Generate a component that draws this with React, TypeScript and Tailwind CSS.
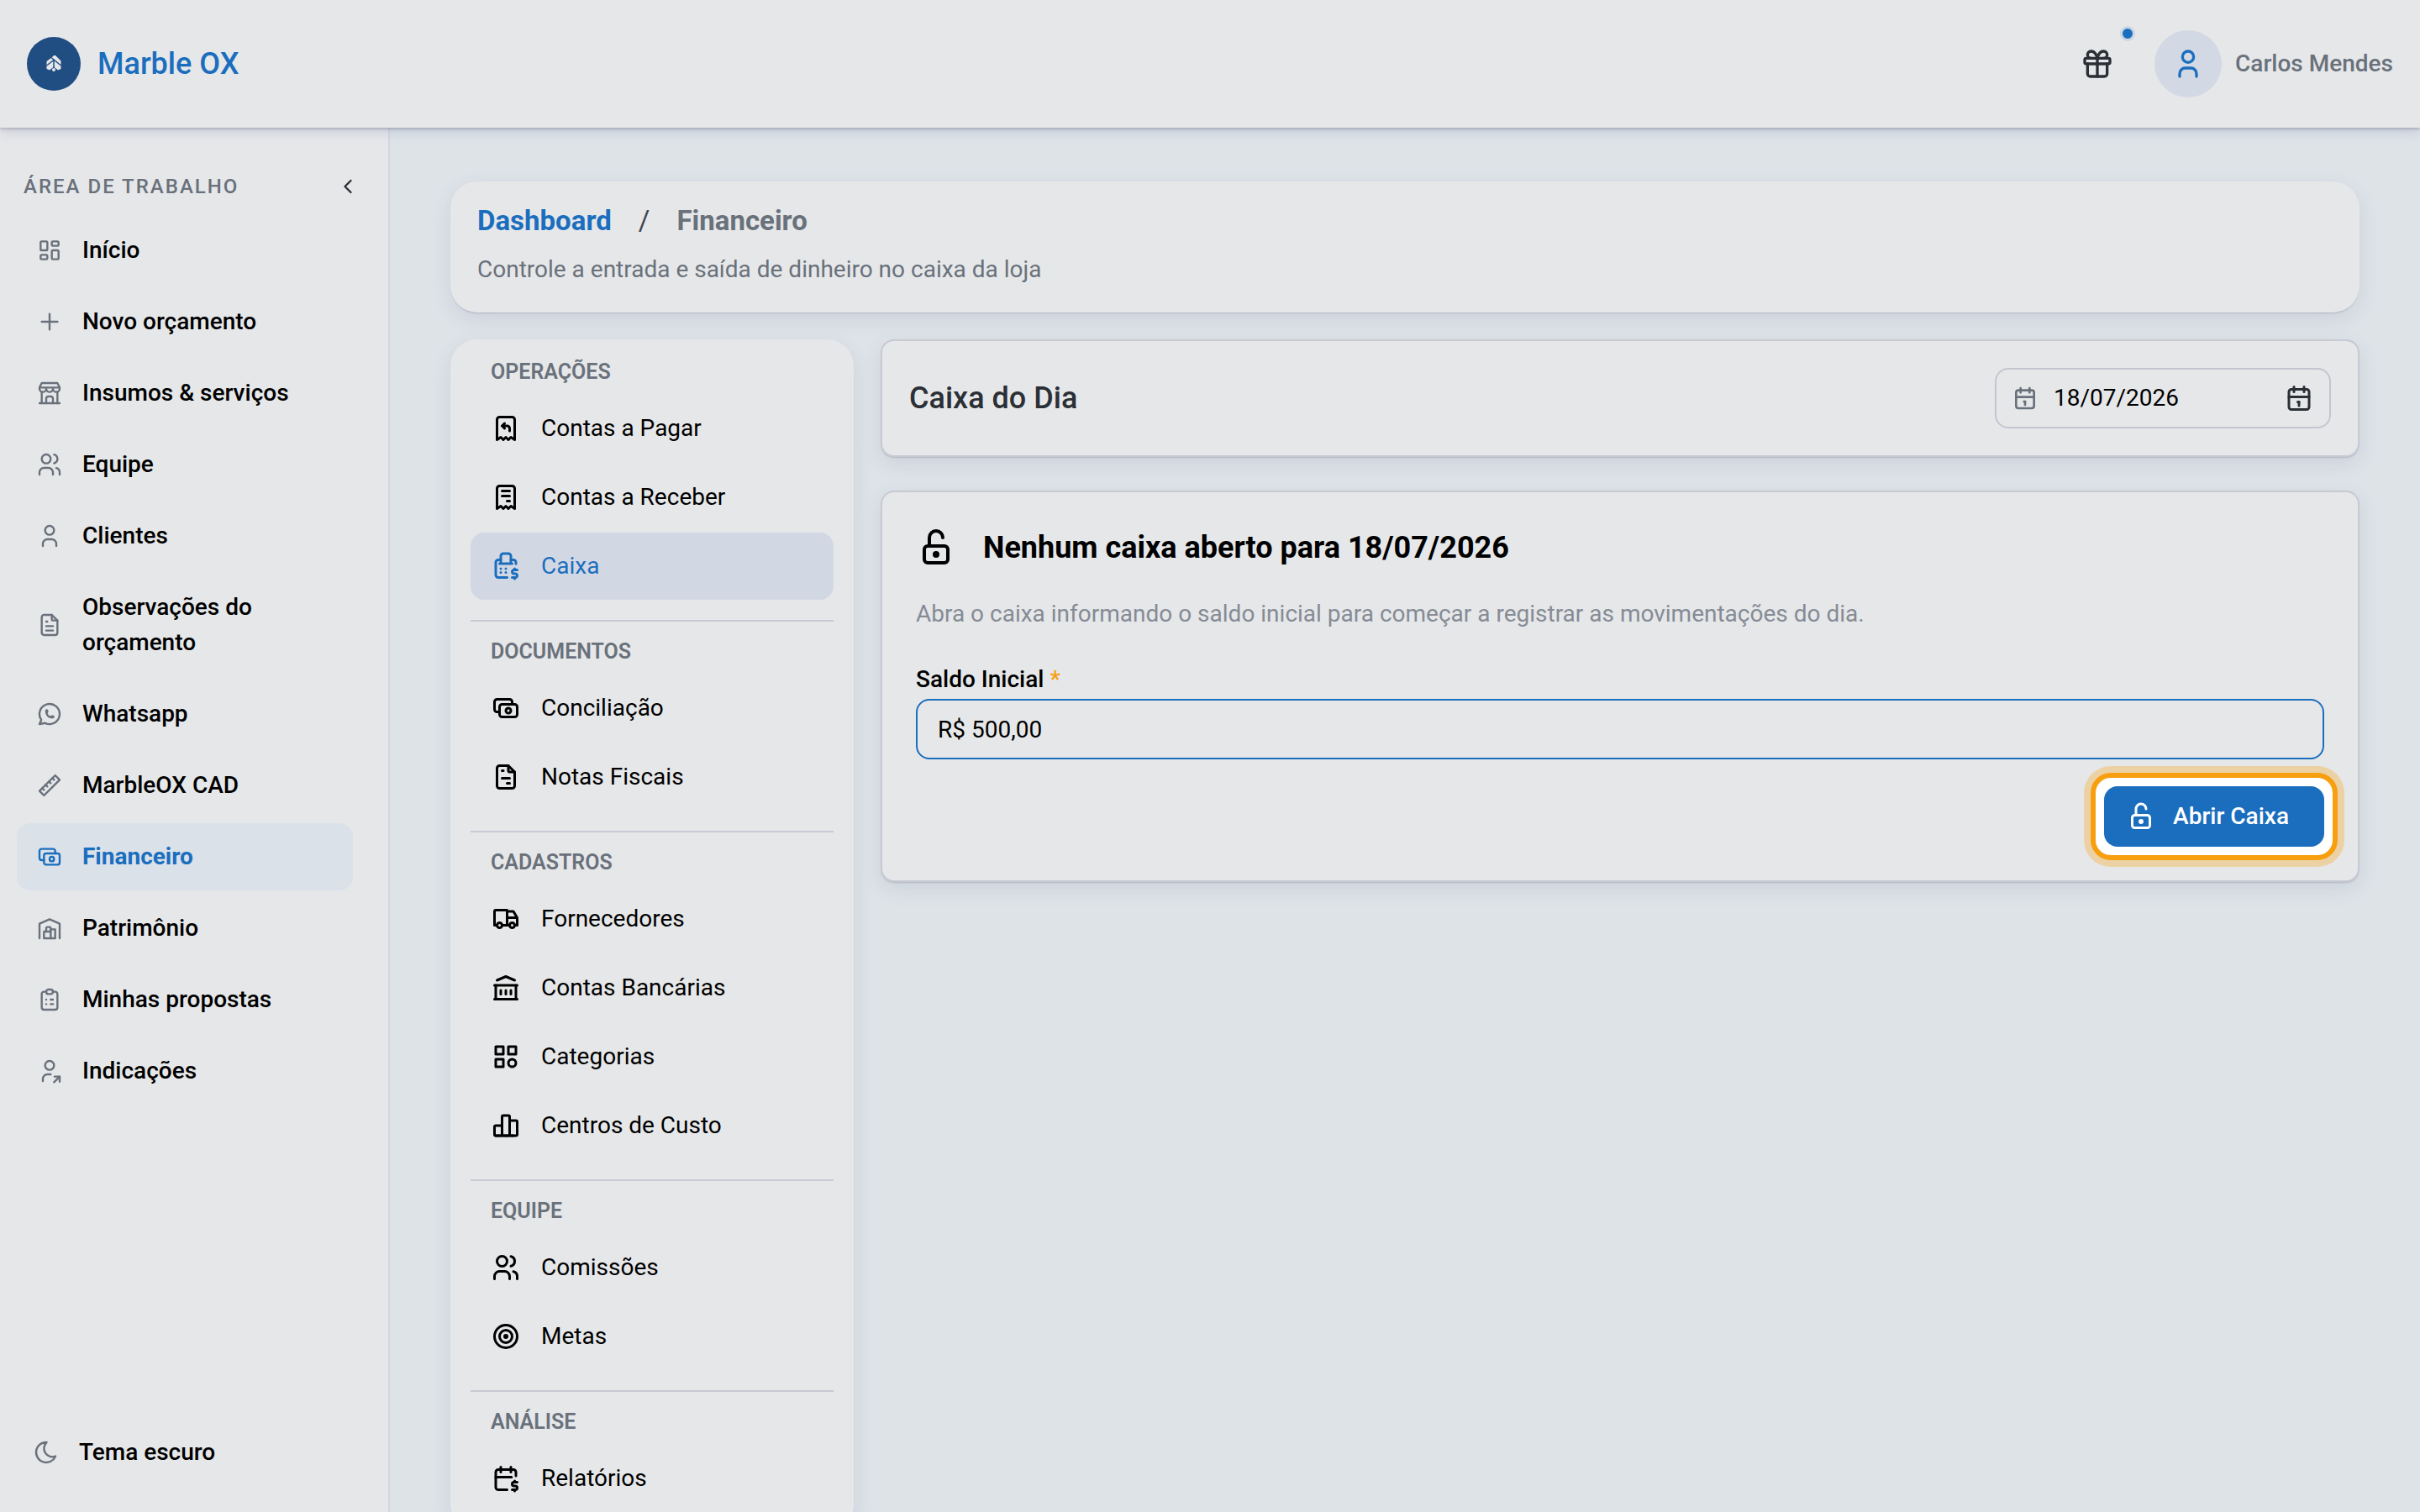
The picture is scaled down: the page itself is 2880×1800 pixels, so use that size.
import { useState } from 'react';
import type { IconType } from 'react-icons';
import {
    TbBrandWhatsapp,
    TbBuildingBank,
    TbBuildingStore,
    TbBuildingWarehouse,
    TbCalendar,
    TbCalendarDollar,
    TbCash,
    TbCashRegister,
    TbCategory,
    TbChartBar,
    TbChevronLeft,
    TbClipboardList,
    TbFileInvoice,
    TbFileText,
    TbGift,
    TbLayoutDashboard,
    TbLockOpen,
    TbMoon,
    TbPlus,
    TbReceipt,
    TbReceiptRefund,
    TbRuler2,
    TbTarget,
    TbTruck,
    TbUser,
    TbUserShare,
    TbUsers,
} from 'react-icons/tb';

type MenuItem = { label: string; icon: IconType };
type MenuSection = { title: string; items: MenuItem[] };

const workspaceItems: MenuItem[] = [
    { label: 'Início', icon: TbLayoutDashboard },
    { label: 'Novo orçamento', icon: TbPlus },
    { label: 'Insumos & serviços', icon: TbBuildingStore },
    { label: 'Equipe', icon: TbUsers },
    { label: 'Clientes', icon: TbUser },
    { label: 'Observações do orçamento', icon: TbFileText },
    { label: 'Whatsapp', icon: TbBrandWhatsapp },
    { label: 'MarbleOX CAD', icon: TbRuler2 },
    { label: 'Financeiro', icon: TbCash },
    { label: 'Patrimônio', icon: TbBuildingWarehouse },
    { label: 'Minhas propostas', icon: TbClipboardList },
    { label: 'Indicações', icon: TbUserShare },
];

const financeSections: MenuSection[] = [
    {
        title: 'Operações',
        items: [
            { label: 'Contas a Pagar', icon: TbReceiptRefund },
            { label: 'Contas a Receber', icon: TbReceipt },
            { label: 'Caixa', icon: TbCashRegister },
        ],
    },
    {
        title: 'Documentos',
        items: [
            { label: 'Conciliação', icon: TbCash },
            { label: 'Notas Fiscais', icon: TbFileInvoice },
        ],
    },
    {
        title: 'Cadastros',
        items: [
            { label: 'Fornecedores', icon: TbTruck },
            { label: 'Contas Bancárias', icon: TbBuildingBank },
            { label: 'Categorias', icon: TbCategory },
            { label: 'Centros de Custo', icon: TbChartBar },
        ],
    },
    {
        title: 'Equipe',
        items: [
            { label: 'Comissões', icon: TbUsers },
            { label: 'Metas', icon: TbTarget },
        ],
    },
    {
        title: 'Análise',
        items: [{ label: 'Relatórios', icon: TbCalendarDollar }],
    },
];

const cardShadow = 'shadow-[0_2px_2px_-1px_rgba(50,55,85,0.2),0_8px_24px_rgba(70,80,140,0.11)]';

function Logo() {
    return (
        <svg viewBox="0 0 64 64" className="size-16 shrink-0" aria-hidden="true">
            <circle cx="32" cy="32" r="32" fill="#204d82" />
            <path d="M23.5 29 L29.500 24.500 L32 22 L34 22 L40.500 28.500 V38 L37 39.500 L32 35.500 L27 39.500 L23.500 38 Z" fill="#e6e7e9" />
            <path d="M29 24.500 L40.500 34 M23.500 34 L32 27.500 M32 27.500 V37" fill="none" stroke="#204d82" strokeWidth="1.5" />
            <circle cx="32" cy="39" r="2" fill="#e6e7e9" />
        </svg>
    );
}

function Header() {
    return (
        <header className="relative z-10 flex h-[152px] shrink-0 items-center justify-between bg-[#e6e7e9] px-8 shadow-[0_2px_3px_rgba(50,55,85,0.22),0_4px_14px_rgba(70,80,140,0.18)]">
            <a href="#" className="flex items-center gap-5 text-[36px] leading-[54px] font-medium text-[#1b6ebe]">
                <Logo />
                Marble OX
            </a>
            <div className="flex items-center">
                <button type="button" aria-label="Indique e ganhe" className="relative mr-8 flex size-[72px] items-center justify-center text-[#2b2f36]">
                    <TbGift className="size-10" />
                    <span className="absolute -top-[9px] -right-[9px] size-[18px] rounded-full border-3 border-[#cbd5e3] bg-[#1b6ebe]" />
                </button>
                <button type="button" className="flex items-center gap-4 text-[28px] leading-[42px] font-medium text-[#69717b]">
                    <span className="flex size-20 items-center justify-center rounded-full bg-[#d2d9e4] text-[#1b6ebe]">
                        <TbUser className="size-10" />
                    </span>
                    Carlos Mendes
                </button>
            </div>
        </header>
    );
}

function Sidebar() {
    const active = 'Financeiro';

    return (
        <aside className="flex w-[464px] shrink-0 flex-col border-r-2 border-[#d2d9e4] bg-[#e6e7e9] pt-[52px] pb-[50px]">
            <div className="flex items-center justify-between pr-[34px] pl-7">
                <h2 className="text-[24px] leading-[36px] font-medium tracking-[2px] text-[#69717b] uppercase">Área de trabalho</h2>
                <button type="button" aria-label="Recolher menu" className="text-[#2b2f36]">
                    <TbChevronLeft className="size-7" />
                </button>
            </div>
            <nav className="mt-[18px] flex flex-col gap-[5px] pr-[42px] pl-5">
                {workspaceItems.map(item => (
                    <a
                        key={item.label}
                        href="#"
                        className={`flex items-center gap-[23px] rounded-2xl py-[19px] pr-6 pl-[23px] text-[28px] leading-[42px] ${
                            item.label === active ? 'bg-[#dae1e9] font-bold text-[#1b6ebe]' : 'font-medium text-black'
                        }`}
                    >
                        <item.icon
                            strokeWidth={1.8}
                            className={`size-8 shrink-0 ${item.label === active ? 'text-[#1b6ebe]' : 'text-[#69717b]'}`}
                        />
                        {item.label}
                    </a>
                ))}
            </nav>
            <button type="button" className="mt-auto flex items-center gap-[23px] pl-[39px] text-[28px] leading-[42px] font-medium text-black">
                <TbMoon strokeWidth={1.8} className="size-8 text-[#69717b]" />
                Tema escuro
            </button>
        </aside>
    );
}

function FinanceMenu() {
    const active = 'Caixa';

    return (
        <nav className={`w-[480px] shrink-0 rounded-[32px] bg-[#e6e7e9] px-6 pt-[21px] pb-6 ${cardShadow}`}>
            {financeSections.map((section, index) => (
                <section key={section.title} className={index > 0 ? 'mt-6 border-t-2 border-[#c7cad2] pt-[18px]' : ''}>
                    <h3 className="mb-[9px] px-6 text-[25px] leading-[36px] font-semibold text-[#69717b] uppercase">{section.title}</h3>
                    <div className="flex flex-col gap-0.5">
                        {section.items.map(item => (
                            <a
                                key={item.label}
                                href="#"
                                className={`flex items-center gap-6 rounded-2xl px-6 py-[19px] text-[28px] leading-[42px] ${
                                    item.label === active ? 'bg-[#d2d8e3] text-[#1b6ebe]' : 'text-black'
                                }`}
                            >
                                <item.icon className="size-9 shrink-0" />
                                {item.label}
                            </a>
                        ))}
                    </div>
                </section>
            ))}
        </nav>
    );
}

export default function App() {
    const [date, setDate] = useState('18/07/2026');
    const [balance, setBalance] = useState('R$ 500,00');

    return (
        <div className="flex h-screen flex-col overflow-hidden bg-[#dde3e7] font-['Roboto',sans-serif]">
            <Header />
            <div className="flex min-h-0 flex-1">
                <Sidebar />
                <main className="min-w-0 flex-1 overflow-hidden px-[72px] pt-16">
                    <div className={`rounded-[32px] bg-[#e6e7e9] px-8 pt-[23px] pb-[30px] ${cardShadow}`}>
                        <div className="flex items-center gap-8 text-[33px] leading-[48px] font-bold">
                            <a href="#" className="text-[#1b6ebe]">Dashboard</a>
                            <span className="font-normal text-[#40454c]">/</span>
                            <span className="text-[#69717b]">Financeiro</span>
                        </div>
                        <p className="mt-[13px] text-[28px] leading-[42px] text-[#69717b]">Controle a entrada e saída de dinheiro no caixa da loja</p>
                    </div>

                    <div className="mt-8 flex items-start gap-8">
                        <FinanceMenu />

                        <div className="flex min-w-0 flex-1 flex-col gap-10">
                            <div className={`flex items-center justify-between rounded-2xl border-2 border-[#c7cad2] bg-[#e6e7e9] p-8 ${cardShadow}`}>
                                <h1 className="text-[36px] leading-[54px] font-medium text-[#2b2f36]">Caixa do Dia</h1>
                                <div className="flex h-[72px] w-[400px] items-center rounded-2xl border-2 border-[#c3c6cf] px-[18px]">
                                    <TbCalendar className="size-8 shrink-0 text-[#69717b]" />
                                    <input
                                        type="text"
                                        aria-label="Data do caixa"
                                        value={date}
                                        onChange={(e) => setDate(e.target.value)}
                                        className="ml-[18px] min-w-0 flex-1 bg-transparent text-[28px] leading-[42px] text-black outline-none"
                                    />
                                    <button type="button" aria-label="Abrir calendário" className="text-[#2b2f36]">
                                        <TbCalendar className="size-9" />
                                    </button>
                                </div>
                            </div>

                            <form
                                onSubmit={(e) => e.preventDefault()}
                                className={`rounded-2xl border-2 border-[#c7cad2] bg-[#e6e7e9] p-10 ${cardShadow}`}
                            >
                                <div className="flex items-center gap-8">
                                    <TbLockOpen className="size-12 text-black" />
                                    <h2 className="text-[36px] leading-[52px] font-bold text-black">Nenhum caixa aberto para {date}</h2>
                                </div>
                                <p className="mt-8 text-[28px] leading-[42px] text-[#858b95]">
                                    Abra o caixa informando o saldo inicial para começar a registrar as movimentações do dia.
                                </p>
                                <label htmlFor="saldo-inicial" className="mt-9 block text-[28px] leading-[42px] font-medium text-black">
                                    Saldo Inicial <span className="text-[#f89f0f]">*</span>
                                </label>
                                <input
                                    id="saldo-inicial"
                                    type="text"
                                    value={balance}
                                    onChange={(e) => setBalance(e.target.value)}
                                    className="mt-0.5 h-[72px] w-full rounded-2xl border-2 border-[#1b6ebe] bg-transparent px-6 text-[28px] leading-[42px] text-black outline-none"
                                />
                                <div className="mt-8 flex justify-end">
                                    {/* destaque do tour em volta do botão */}
                                    <div className="relative">
                                        <span className="absolute -inset-4 rounded-3xl border-6 border-[#f89f0f] bg-white shadow-[0_0_0_8px_#ecd1a5]" />
                                        <button type="submit" className="relative flex h-[72px] items-center gap-5 rounded-2xl bg-[#1b6ebe] pr-[42px] pl-[26px] text-[28px] leading-[42px] font-medium text-white">
                                            <TbLockOpen className="size-9" />
                                            Abrir Caixa
                                        </button>
                                    </div>
                                </div>
                            </form>
                        </div>
                    </div>
                </main>
            </div>
        </div>
    );
}
